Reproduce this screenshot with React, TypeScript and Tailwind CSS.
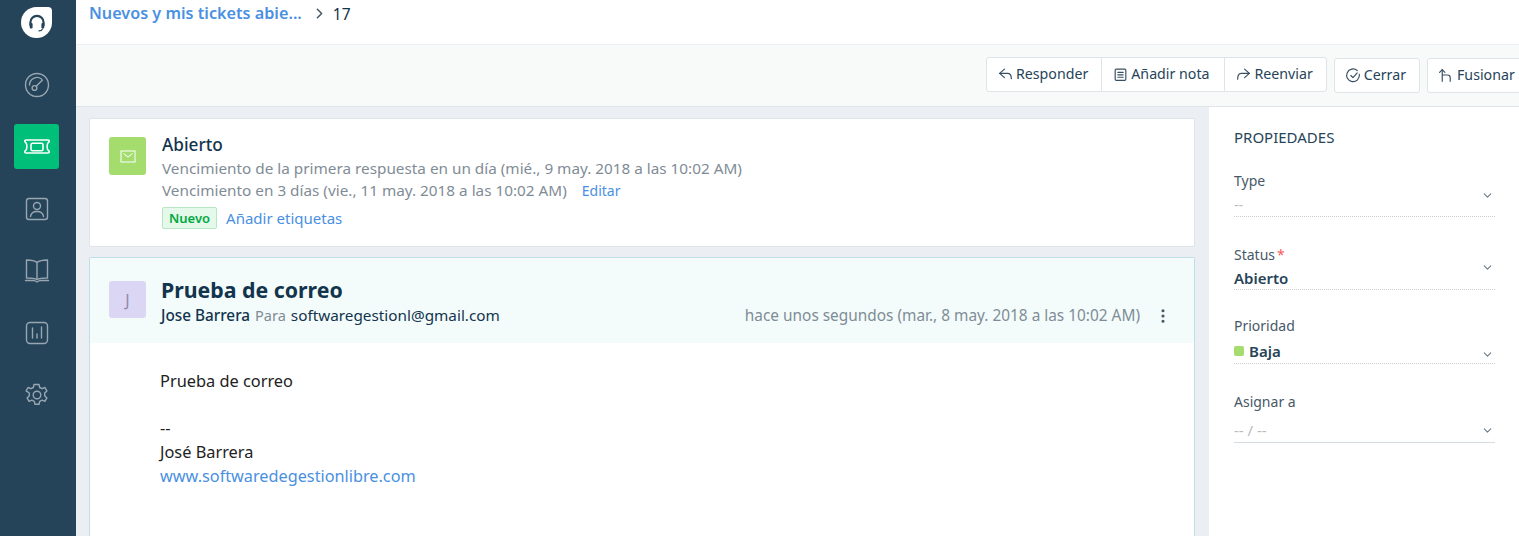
import React from 'react';
import { ChevronRight, ChevronDown, MoreVertical } from 'lucide-react';

const font = "font-['Noto_Sans','Open_Sans',sans-serif]";

const NavIcon = ({ children, active }: { children: React.ReactNode; active?: boolean }) => (
  <div className={`flex h-[45px] w-[45px] items-center justify-center rounded-[3px] ${active ? 'bg-[#00bf78]' : ''}`}>
    <svg width="28" height="28" viewBox="0 0 28 28" fill="none" stroke={active ? '#ffffff' : '#98a6b1'} strokeWidth="1.4" strokeLinecap="round" strokeLinejoin="round">
      {children}
    </svg>
  </div>
);

const ToolButton = ({ icon, label, className = '' }: { icon: React.ReactNode; label: string; className?: string }) => (
  <div className={`flex h-full items-center gap-[2px] whitespace-nowrap text-[14.2px] text-[#264459] ${className}`}>
    {icon}
    <span className="mb-[2px]">{label}</span>
  </div>
);

const ToolIcon = ({ children }: { children: React.ReactNode }) => (
  <svg width="17" height="17" viewBox="0 0 16 16" fill="none" stroke="#384f62" strokeWidth="1.1" strokeLinecap="round" strokeLinejoin="round">
    {children}
  </svg>
);

const Property = ({ label, required, children, solid, className = '' }: { label: string; required?: boolean; children: React.ReactNode; solid?: boolean; className?: string }) => (
  <div className={`relative w-[261px] border-b ${solid ? 'border-solid border-[#d5dce2]' : 'border-dotted border-[#c9ced2]'} ${className}`}>
    <div className="text-[14px] leading-[20px] text-[#475867]">
      {label}
      {required && <span className="ml-[2px] text-[#f85c5c]">*</span>}
    </div>
    {children}
  </div>
);

export default function App() {
  return (
    <div className={`flex h-[536px] w-[1519px] overflow-hidden bg-white ${font}`}>
      <aside className="flex w-[76px] shrink-0 flex-col items-center bg-[#264459] pr-[3px]">
        <div className="mt-[7px] flex h-[31px] w-[31px] items-center justify-center rounded-[50%] rounded-tr-[4px] bg-white">
          <svg width="22" height="22" viewBox="0 0 20 20" fill="none" stroke="#264459" strokeWidth="2" strokeLinecap="round">
            <path d="M4 12V9.500a6 6 0 0 1 12 0V12" />
            <rect x="3.400" y="10" width="2.600" height="5" rx="1" fill="#264459" stroke="none" />
            <rect x="14" y="10" width="2.600" height="5" rx="1" fill="#264459" stroke="none" />
            <path d="M15 15.500c-.5 1.200-1.600 1.700-3.200 1.700" strokeWidth="1" />
          </svg>
        </div>
        <div className="mt-[24px] flex flex-col items-center gap-[17px]">
          <NavIcon>
            <circle cx="14" cy="14" r="11.500" />
            <path d="M6.500 14a7.500 7.500 0 0 1 12-6" />
            <circle cx="11.500" cy="17" r="2.400" />
            <path d="M13.200 15.200 19.500 9" />
          </NavIcon>
          <NavIcon active>
            <path d="M3 7h22c1 0 1.400.6 1.200 1.400-.2.9-1 1.200-1.500 2-.7 1-.7 5.200 0 6.200.5.8 1.300 1.100 1.500 2 .2.8-.2 1.400-1.200 1.400H3c-1 0-1.400-.6-1.200-1.400.2-.9 1-1.200 1.500-2 .7-1 .7-5.200 0-6.200-.5-.8-1.300-1.100-1.500-2C1.600 7.600 2 7 3 7Z" strokeWidth="1.600" />
            <rect x="8" y="10.200" width="12" height="7.600" rx="1.500" strokeWidth="1.600" />
          </NavIcon>
          <NavIcon>
            <rect x="3.500" y="3.500" width="21" height="21" rx="2.500" />
            <circle cx="14" cy="11" r="3.500" />
            <path d="M7.500 21.500c.5-3.500 3-5 6.500-5s6 1.500 6.500 5" />
          </NavIcon>
          <NavIcon>
            <path d="M14 5.500C12 3.800 8 3 3.500 3v18c4.500 0 8.500.3 10.500 1.500 2-1.200 6-1.500 10.500-1.500V3C20 3 16 3.800 14 5.500Z" />
            <path d="M14 5.500v17" />
            <path d="M2.500 23.500h9l2.500 1.500 2.500-1.500h9" />
          </NavIcon>
          <NavIcon>
            <rect x="3.500" y="3.500" width="21" height="21" rx="3.500" />
            <path d="M9.500 9v10M14 15v4M18.500 8v11" />
          </NavIcon>
          <NavIcon>
            <circle cx="14" cy="14" r="3.800" />
            <path d="M12 3.500h4l.7 3 2.400 1.200 2.800-1.200 2 3.400-2.200 2.100v2.800l2.200 2.100-2 3.400-2.800-1.200-2.400 1.200-.7 3h-4l-.7-3-2.400-1.200-2.800 1.200-2-3.400 2.200-2.100v-2.800L3.100 9.900l2-3.400 2.800 1.200 2.400-1.200.7-3Z" />
          </NavIcon>
        </div>
      </aside>

      <div className="flex min-w-0 flex-1 flex-col">
        <header className="flex h-[45px] shrink-0 items-start border-b border-[#ebeff3] bg-white pl-[13px] pt-[2px]">
          <span className="text-[16.200px] font-semibold leading-[22px] text-[#4a90e2]">Nuevos y mis tickets abie...</span>
          <ChevronRight className="ml-[9px] mt-[3px] h-[17px] w-[17px] text-[#475867]" strokeWidth={2.200} />
          <span className="ml-[5px] text-[15.500px] leading-[24px] text-[#12344d]">17</span>
        </header>

        <div className="flex h-[62px] shrink-0 items-center justify-start overflow-hidden border-b border-[#dfe4e8] bg-[#f8f9f9] pl-[910px]">
          <div className="flex h-[35px] shrink-0 -translate-y-[1px] items-center rounded-[3px] border border-[#dfe4e8] bg-white">
            <ToolButton className="border-r border-[#dfe4e8] pl-[10px] pr-[13px]" label="Responder" icon={
              <ToolIcon><path d="M7 3 2.500 7 7 11" /><path d="M2.500 7H10c2.500 0 3.500 1.500 3.500 5" /></ToolIcon>
            } />
            <ToolButton className="border-r border-[#dfe4e8] pl-[10px] pr-[15px]" label="Añadir nota" icon={
              <ToolIcon><rect x="3" y="3" width="10" height="10.500" rx="1" /><path d="M5.500 6h5M5.500 8.300h5M5.500 10.600h5" /></ToolIcon>
            } />
            <ToolButton className="pl-[10px] pr-[13px]" label="Reenviar" icon={
              <ToolIcon><path d="M9 3l4.500 4L9 11" /><path d="M13.500 7H6C3.500 7 2.500 8.500 2.500 12.500" /></ToolIcon>
            } />
          </div>
          <ToolButton className="ml-[7px] !h-[35px] shrink-0 rounded-[3px] border border-[#dfe4e8] bg-white pl-[10px] pr-[13px]" label="Cerrar" icon={
            <ToolIcon><path d="M13.500 7a6 6 0 1 1-2-3.700" /><path d="M5.500 8l2 2 4-4.500" /></ToolIcon>
          } />
          <ToolButton className="ml-[7px] !h-[35px] shrink-0 rounded-[3px] border border-[#dfe4e8] bg-white pl-[10px] pr-[13px]" label="Fusionar" icon={
            <ToolIcon><path d="M1.500 5 4 2.500 6.500 5" /><path d="M4 2.500v11M4 7.500h5c1.500 0 2.500.8 2.500 2.500v3.500" /></ToolIcon>
          } />
        </div>

        <div className="flex min-h-0 flex-1">
          <main className="w-[1132px] shrink-0 bg-[#ebeff3] pl-[13px] pr-[13px] pt-[11px]">
            <section className="flex h-[129px] rounded-[2px] border border-[#dfe4e8] bg-white pl-[19px] pt-[18px]">
              <div className="flex h-[38px] w-[37px] items-center justify-center rounded-[3px] bg-[#a4dc6e]">
                <svg width="16" height="13" viewBox="0 0 16 13" fill="none" stroke="#ffffff" strokeWidth="1">
                  <rect x="1" y="1" width="14" height="11" />
                  <path d="M3.500 3.500 8 7l4.500-3.500" />
                </svg>
              </div>
              <div className="ml-[16px]">
                <div className="-mt-[3px] text-[17.200px] font-medium leading-[22px] text-[#12344d]">Abierto</div>
                <div className="mt-[1px] text-[15.300px] leading-[22px] text-[#7f8c96]">Vencimiento de la primera respuesta en un día (mié., 9 may. 2018 a las 10:02 AM)</div>
                <div className="text-[15.300px] leading-[22px] text-[#7f8c96]">
                  Vencimiento en 3 días (vie., 11 may. 2018 a las 10:02 AM)
                  <span className="ml-[15px] text-[14px] text-[#4a90e2]">Editar</span>
                </div>
                <div className="mt-[5px] flex items-center">
                  <span className="flex h-[22px] items-center rounded-[2px] border border-[#b6e6c3] bg-[#e5f9eb] px-[6px] text-[13px] font-semibold text-[#00a83f]">Nuevo</span>
                  <span className="ml-[9px] text-[15px] text-[#4a90e2]">Añadir etiquetas</span>
                </div>
              </div>
            </section>

            <section className="mt-[10px] h-[300px] rounded-t-[2px] border border-b-0 border-[#bfdfe8] bg-white">
              <div className="flex h-[85px] bg-[#f3fcfb] pl-[19px] pr-[22px] pt-[23px]">
                <div className="flex h-[37px] w-[37px] items-center justify-center rounded-[3px] bg-[#dcd6f5] text-[16px] text-[#8f8aa8]">J</div>
                <div className="ml-[15px] -mt-[7px]">
                  <div className="text-[21.300px] font-bold leading-[32px] text-[#12344d]">Prueba de correo</div>
                  <div className="-mt-[1px] whitespace-nowrap text-[15.300px] leading-[20px] text-[#12344d]">
                    <span className="font-medium">Jose Barrera</span>
                    <span className="ml-[5px] text-[14.500px] text-[#7f8c96]">Para</span>
                    <span className="ml-[5px]">softwaregestionl@gmail.com</span>
                  </div>
                </div>
                <div className="ml-auto mt-[25px] flex h-[20px] items-center text-[15.400px] text-[#7f8c96]">
                  hace unos segundos (mar., 8 may. 2018 a las 10:02 AM)
                  <MoreVertical className="ml-[14px] h-[18px] w-[18px] text-[#475867]" strokeWidth={2.200} />
                </div>
              </div>
              <div className="pl-[70px] pt-[26px] text-[16.350px] leading-[24px] text-[#222222]">
                <div>Prueba de correo</div>
                <div className="mt-[23px]">--</div>
                <div>José Barrera</div>
                <div className="text-[16.250px] text-[#4a90e2]">www.softwaredegestionlibre.com</div>
              </div>
            </section>
          </main>

          <aside className="flex-1 border-l border-[#ebeff3] bg-white pl-[25px] pt-[20px]">
            <div className="text-[15px] leading-[20px] text-[#264459]">PROPIEDADES</div>
            <Property label="Type" className="mt-[24px] h-[46px]">
              <div className="mt-[4px] text-[14px] leading-[20px] text-[#b5bcc2]">--</div>
              <ChevronDown className="absolute right-[1px] top-[18px] h-[13px] w-[13px] text-[#6b7b88]" />
            </Property>
            <Property label="Status" required className="mt-[28px] h-[45px]">
              <div className="mt-[3px] text-[15px] font-semibold leading-[20px] text-[#264459]">Abierto</div>
              <ChevronDown className="absolute right-[1px] top-[16px] h-[13px] w-[13px] text-[#6b7b88]" />
            </Property>
            <Property label="Prioridad" className="mt-[26px] h-[48px]">
              <div className="mt-[5px] flex items-center text-[15px] font-semibold leading-[20px] text-[#264459]">
                <span className="mr-[5px] h-[10px] w-[10px] rounded-[2px] bg-[#a4dc6e]" />Baja
              </div>
              <ChevronDown className="absolute right-[1px] top-[32px] h-[13px] w-[13px] text-[#6b7b88]" />
            </Property>
            <Property label="Asignar a" solid className="mt-[28px] h-[51px]">
              <div className="mt-[8px] text-[15px] leading-[20px] text-[#b5bcc2]">-- / --</div>
              <ChevronDown className="absolute right-[1px] top-[32px] h-[13px] w-[13px] text-[#6b7b88]" />
            </Property>
          </aside>
        </div>
      </div>
    </div>
  );
}
